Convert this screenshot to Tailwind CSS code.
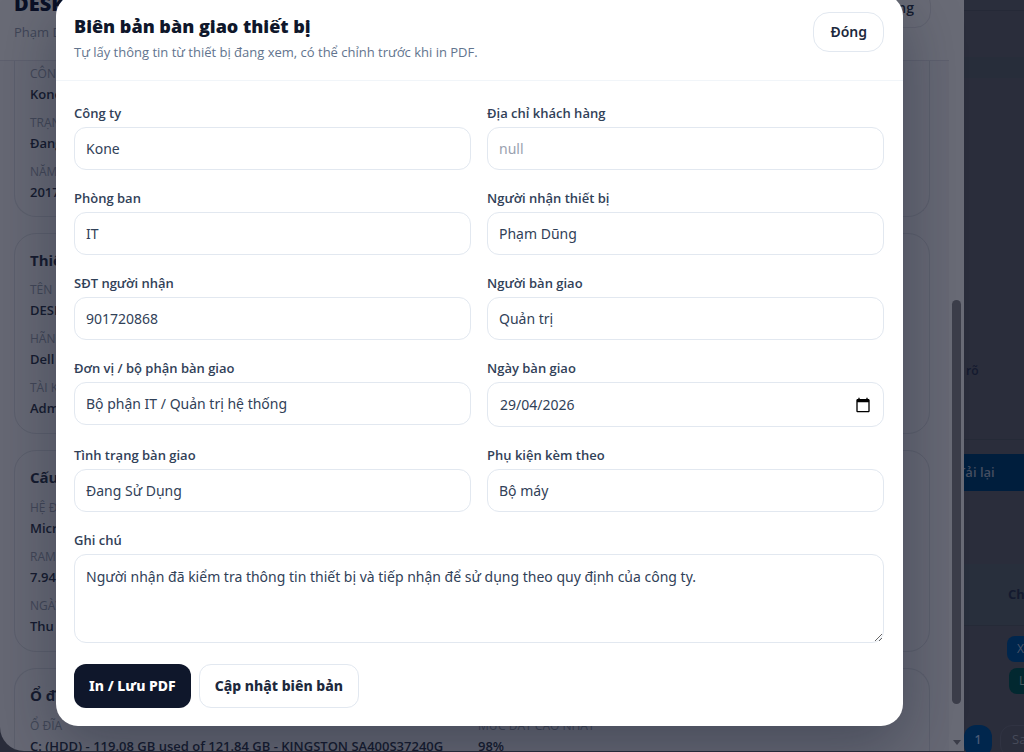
<!DOCTYPE html>
<html lang="vi">
<head>
    <meta charset="UTF-8">
    <meta name="viewport" content="width=device-width, initial-scale=1.0">
    <title>Biên bản bàn giao thiết bị</title>
    <script src="https://cdn.jsdelivr.net/npm/@tailwindcss/browser@4"></script>
</head>
<body class="relative flex h-screen overflow-hidden bg-[#2a2d3b] font-['Open_Sans','Noto_Sans',sans-serif]">

    <!-- Device detail drawer -->
    <main class="relative mb-px flex min-w-0 flex-1 overflow-hidden rounded-bl-3xl bg-[#666874] text-[#151b2e]">
        <div class="min-w-0 flex-1">
            <header class="flex h-[61px] items-start justify-between border-b border-[#5e606e] bg-[#696b76] pr-[18px] pl-3.5">
                <div class="-mt-2">
                    <h1 class="text-xl leading-6 font-extrabold text-[#0a1026]">DESKTOP</h1>
                    <p class="mt-1 text-[13px] leading-6 text-[#3f4556]">Phạm Dũng</p>
                </div>
                <button type="button" class="-mt-3 h-10 rounded-2xl border border-[#60626f] px-4 text-sm font-semibold">Đóng</button>
            </header>

            <div class="pr-[19px] pl-3.5 text-[13px]">
                <section class="rounded-b-[22px] border border-t-0 border-[#5c5f6c] px-[15px] pb-3.5">
                    <dl class="leading-5">
                        <dt class="pt-[3px] text-xs leading-5 text-[#424757]">CÔNG TY</dt>
                        <dd class="mb-[9px] font-semibold">Kone</dd>
                        <dt class="text-xs leading-5 text-[#424757]">TRẠNG THÁI</dt>
                        <dd class="mb-[9px] font-semibold">Đang Sử Dụng</dd>
                        <dt class="text-xs leading-5 text-[#424757]">NĂM</dt>
                        <dd class="font-semibold">2017</dd>
                    </dl>
                </section>

                <section class="mt-4 rounded-[22px] border border-[#5c5f6c] px-[15px] pt-3.5 pb-[15px]">
                    <h2 class="mb-2 text-[15px] leading-6 font-bold">Thiết bị</h2>
                    <dl class="leading-5">
                        <dt class="text-xs leading-5 text-[#424757]">TÊN MÁY</dt>
                        <dd class="mb-[9px] font-semibold">DESKTOP</dd>
                        <dt class="text-xs leading-5 text-[#424757]">HÃNG</dt>
                        <dd class="mb-[9px] font-semibold">Dell</dd>
                        <dt class="text-xs leading-5 text-[#424757]">TÀI KHOẢN</dt>
                        <dd class="font-semibold">Admin</dd>
                    </dl>
                </section>

                <section class="mt-4 rounded-[22px] border border-[#5c5f6c] px-[15px] pt-3.5 pb-[15px]">
                    <h2 class="mb-[9px] text-[15px] leading-6 font-bold">Cấu hình</h2>
                    <dl class="leading-5">
                        <dt class="text-xs leading-5 text-[#424757]">HỆ ĐIỀU HÀNH</dt>
                        <dd class="mb-[9px] font-semibold">Microsoft</dd>
                        <dt class="text-xs leading-5 text-[#424757]">RAM</dt>
                        <dd class="mb-[9px] font-semibold">7.94</dd>
                        <dt class="text-xs leading-5 text-[#424757]">NGÀY</dt>
                        <dd class="font-semibold">Thu</dd>
                    </dl>
                </section>

                <section class="mt-4 rounded-t-[22px] border border-b-0 border-[#5c5f6c] px-[15px] pt-3.5">
                    <h2 class="mb-[9px] text-[15px] leading-6 font-bold">Ổ đĩa</h2>
                    <dl class="grid grid-cols-2 leading-5">
                        <div>
                            <dt class="text-xs leading-5 text-[#424757]">Ổ ĐĨA</dt>
                            <dd class="font-semibold whitespace-nowrap">C: (HDD) - 119.08 GB used of 121.84 GB - KINGSTON SA400S37240G</dd>
                        </div>
                        <div class="pl-1.5">
                            <dt class="text-xs leading-5 text-[#424757]">MỨC ĐẦY CAO NHẤT</dt>
                            <dd class="font-semibold">98%</dd>
                        </div>
                    </dl>
                </section>
            </div>
        </div>

        <!-- Scrollbar -->
        <div class="flex w-[15px] flex-col items-center justify-end bg-[#696b76] pb-1.5">
            <div class="mb-9 h-[404px] w-[9px] rounded-full bg-[#3c3e4a]"></div>
            <svg class="h-[5px] w-2" viewBox="0 0 8 5" fill="#3c3e4a"><path d="M0 0h8L4 5z"/></svg>
        </div>
    </main>

    <!-- Dimmed list page -->
    <aside class="w-[60px] shrink-0 overflow-hidden text-xs text-[#141a2f]">
        <div class="h-[11px] border-b border-[#252937] bg-[#2a2e3c]"></div>
        <div class="mt-[46px] h-[21px] bg-[#272d3a]"></div>
        <div class="flex h-[362px] items-end border-b border-[#252a37] pb-[58px]">
            <p class="pl-0.5 leading-5 font-semibold">rõ</p>
        </div>
        <button type="button" class="mt-3.5 block h-[37px] w-full bg-[#001e3d] text-left text-[13px] font-semibold whitespace-nowrap text-[#454d60]"><span class="-ml-1.5">Tải lại</span></button>
        <div class="mt-[73px] flex h-[62px] items-center border-b border-[#252a37] bg-[#282f3c] pl-11 text-[13px] font-bold">Ch</div>
        <div class="flex flex-col items-end gap-1.5 pt-2.5">
            <button type="button" class="h-[26px] w-[17px] rounded-l-lg bg-[#00264d] pl-2.5 text-left text-[#4b5468]">X</button>
            <button type="button" class="h-[26px] w-[15px] rounded-l-lg bg-[#022830] pl-2.5 text-left text-[#46585f]">L</button>
        </div>
        <div class="mt-[31px] flex gap-2">
            <button type="button" class="h-8 w-7 shrink-0 rounded-xl bg-[#00264d] pb-0.5 font-semibold text-[#4b5a75]">1</button>
            <button type="button" class="h-8 w-16 shrink-0 rounded-xl border border-[#303342] pb-0.5 pl-[11px] text-left text-[13px] text-[#464a59]">Sau</button>
        </div>
    </aside>

    <!-- Handover modal -->
    <div role="dialog" aria-labelledby="modalTitle" class="absolute -top-1.5 right-[121px] left-14 rounded-[22px] bg-white text-slate-700 shadow-[0_20px_60px_rgba(15,23,42,0.35)]">
        <div class="flex items-start justify-between border-b border-slate-100 py-[18px] pr-[19px] pl-[18px]">
            <div>
                <h2 id="modalTitle" class="mb-0.5 text-lg leading-7 font-extrabold text-slate-900">Biên bản bàn giao thiết bị</h2>
                <p class="text-[13px] leading-5 text-slate-500">Tự lấy thông tin từ thiết bị đang xem, có thể chỉnh trước khi in PDF.</p>
            </div>
            <button type="button" class="h-10 rounded-2xl border border-slate-200 px-4 font-['Noto_Sans',sans-serif] text-sm font-semibold text-slate-800">Đóng</button>
        </div>

        <form class="pt-[22px] pr-[19px] pb-[18px] pl-[18px]">
            <div class="grid grid-cols-2 items-start gap-x-4 gap-y-[18px] text-[13px] leading-5 font-semibold">
                <div>
                    <label for="company" class="mb-1 block">Công ty</label>
                    <input id="company" type="text" value="Kone" class="block h-[43px] w-full rounded-xl border border-slate-200 px-[11px] font-['Noto_Sans',sans-serif] text-sm font-normal">
                </div>
                <div>
                    <label for="address" class="mb-1 block">Địa chỉ khách hàng</label>
                    <input id="address" type="text" placeholder="null" class="block h-[43px] w-full rounded-xl border border-slate-200 px-[11px] font-['Noto_Sans',sans-serif] text-sm font-normal placeholder:text-gray-400">
                </div>
                <div>
                    <label for="department" class="mb-1 block">Phòng ban</label>
                    <input id="department" type="text" value="IT" class="block h-[43px] w-full rounded-xl border border-slate-200 px-[11px] font-['Noto_Sans',sans-serif] text-sm font-normal">
                </div>
                <div>
                    <label for="receiver" class="mb-1 block">Người nhận thiết bị</label>
                    <input id="receiver" type="text" value="Phạm Dũng" class="block h-[43px] w-full rounded-xl border border-slate-200 px-[11px] font-['Noto_Sans',sans-serif] text-sm font-normal">
                </div>
                <div>
                    <label for="phone" class="mb-1 block">SĐT người nhận</label>
                    <input id="phone" type="text" value="901720868" class="block h-[43px] w-full rounded-xl border border-slate-200 px-[11px] font-['Noto_Sans',sans-serif] text-sm font-normal">
                </div>
                <div>
                    <label for="giver" class="mb-1 block">Người bàn giao</label>
                    <input id="giver" type="text" value="Quản trị" class="block h-[43px] w-full rounded-xl border border-slate-200 px-[11px] font-['Noto_Sans',sans-serif] text-sm font-normal">
                </div>
                <div>
                    <label for="unit" class="mb-1 block">Đơn vị / bộ phận bàn giao</label>
                    <input id="unit" type="text" value="Bộ phận IT / Quản trị hệ thống" class="block h-[43px] w-full rounded-xl border border-slate-200 px-[11px] font-['Noto_Sans',sans-serif] text-sm font-normal">
                </div>
                <div>
                    <label for="date" class="mb-1 block">Ngày bàn giao</label>
                    <div class="flex h-[45px] items-center rounded-xl border border-slate-200 px-3">
                        <input id="date" type="text" value="29/04/2026" class="min-w-0 flex-1 font-['Noto_Sans',sans-serif] text-sm font-normal">
                        <button type="button" aria-label="Chọn ngày" class="text-black">
                            <svg class="h-4 w-4" viewBox="0 0 24 24" fill="currentColor"><path d="M20 3h-1V1h-2v2H7V1H5v2H4c-1.100 0-2 .9-2 2v16c0 1.100.9 2 2 2h16c1.100 0 2-.9 2-2V5c0-1.100-.9-2-2-2zm0 18H4V8h16v13z"/></svg>
                        </button>
                    </div>
                </div>
                <div>
                    <label for="condition" class="mb-1 block">Tình trạng bàn giao</label>
                    <input id="condition" type="text" value="Đang Sử Dụng" class="block h-[43px] w-full rounded-xl border border-slate-200 px-[11px] font-['Noto_Sans',sans-serif] text-sm font-normal">
                </div>
                <div>
                    <label for="accessories" class="mb-1 block">Phụ kiện kèm theo</label>
                    <input id="accessories" type="text" value="Bộ máy" class="block h-[43px] w-full rounded-xl border border-slate-200 px-[11px] font-['Noto_Sans',sans-serif] text-sm font-normal">
                </div>
                <div class="col-span-2">
                    <label for="note" class="mb-1 block">Ghi chú</label>
                    <textarea id="note" class="block h-[89px] w-full resize-y rounded-xl border border-slate-200 px-[11px] py-3 font-['Noto_Sans',sans-serif] text-sm font-normal">Người nhận đã kiểm tra thông tin thiết bị và tiếp nhận để sử dụng theo quy định của công ty.</textarea>
                </div>
            </div>

            <div class="mt-[21px] flex gap-2 font-['Noto_Sans',sans-serif] text-sm font-extrabold">
                <button type="button" class="h-11 rounded-xl bg-slate-900 px-[15px] text-white">In / Lưu PDF</button>
                <button type="button" class="h-11 rounded-xl border border-slate-200 px-[15px] text-slate-800">Cập nhật biên bản</button>
            </div>
        </form>
    </div>

</body>
</html>
